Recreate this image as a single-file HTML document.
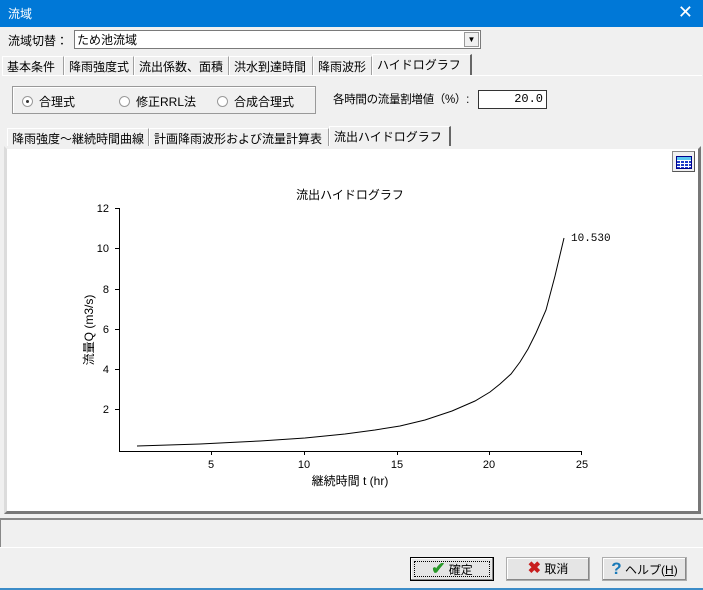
<!DOCTYPE html>
<html><head><meta charset="utf-8"><style>
*{margin:0;padding:0;box-sizing:border-box}
body{width:703px;height:590px;background:#f0f0f0;font-family:"Liberation Sans","Noto Sans CJK JP",sans-serif;font-size:12px;color:#000;position:relative;overflow:hidden}
.abs{position:absolute}
.title{left:0;top:0;width:703px;height:27px;background:#0078d7;color:#fff}
.tab{position:absolute;top:56px;height:19px;line-height:21px;border:1px solid #fff;border-right-color:#a0a0a0;border-bottom:none;padding:0 4px;white-space:nowrap}
.btn{position:absolute;top:557px;height:24px;border:1px solid #adadad;background:#e5e5e5;box-shadow:inset -1px -1px #888,inset 1px 1px #fff;text-align:center;line-height:22px}
.rad{display:inline-block;width:11px;height:11px;border-radius:50%;border:1px solid #999;background:#fff;vertical-align:-1px;margin-right:6px;position:relative}
</style></head><body>
<div class="abs title"><span style="position:absolute;left:8px;top:5px">流域</span><span style="position:absolute;right:10px;top:2px;font-size:18px">✕</span></div>
<div class="abs" style="left:8px;top:32px">流域切替：</div>
<div class="abs" style="left:74px;top:30px;width:407px;height:19px;background:#fff;border:1px solid #7a7a7a"><span style="position:absolute;left:2px;top:0px">ため池流域</span><div style="position:absolute;right:1px;top:1px;width:15px;height:15px;background:#f0f0f0;border:1px solid #999;font-size:8px;text-align:center;line-height:14px">▼</div></div>
<div class="tab" style="left:2px;width:62px">基本条件</div>
<div class="tab" style="left:64px;width:70px">降雨強度式</div>
<div class="tab" style="left:134px;width:95px">流出係数、面積</div>
<div class="tab" style="left:229px;width:84px">洪水到達時間</div>
<div class="tab" style="left:313px;width:59px">降雨波形</div>
<div class="tab" style="left:372px;top:54px;height:21px;width:100px;background:#f0f0f0;border-right:2px solid #666">ハイドログラフ</div>
<div class="abs" style="left:2px;top:75px;width:700px;height:1px;background:#fff"></div>
<div class="abs" style="left:12px;top:86px;width:304px;height:28px;border:1px solid #999;box-shadow:inset 1px 1px #fff"></div>
<div class="abs" style="left:22px;top:93px"><span class="rad"><span style="position:absolute;left:3px;top:3px;width:3px;height:3px;background:#333;border-radius:50%"></span></span>合理式</div>
<div class="abs" style="left:119px;top:93px"><span class="rad"></span>修正RRL法</div>
<div class="abs" style="left:217px;top:93px"><span class="rad"></span>合成合理式</div>
<div class="abs" style="left:333px;top:91px;font-size:11.5px;white-space:nowrap;letter-spacing:-0.3px">各時間の流量割増値（%）:</div>
<div class="abs" style="left:478px;top:90px;width:69px;height:19px;background:#fff;border:1px solid #333;text-align:right;padding-right:3px;line-height:17px;font-family:'Liberation Mono',monospace">20.0</div>
<div class="tab" style="top:128px;left:7px;width:142px">降雨強度～継続時間曲線</div>
<div class="tab" style="top:128px;left:149px;width:180px">計画降雨波形および流量計算表</div>
<div class="tab" style="top:126px;height:21px;left:329px;width:122px;border-right:2px solid #666">流出ハイドログラフ</div>
<div class="abs" style="left:4px;top:146px;width:697px;height:368px;background:#fff;border:3px solid #dcdcdc;border-top-color:#f0f0f0;border-right:3px solid #777;border-bottom:3px solid #777"></div>
<div class="abs" style="left:672px;top:151px;width:23px;height:21px;background:#f0f0f0;border:1px solid #888;border-right-color:#555;border-bottom-color:#555"><div style="position:absolute;left:3px;top:4px;width:16px;height:13px;border:1px solid #00008b;background:repeating-linear-gradient(90deg,#1e3cc8 0 3px,#fff 3px 4px)"><div style="height:3px;background:#5ac8f0"></div><div style="height:9px;background:repeating-linear-gradient(0deg,transparent 0 2px,#fff 2px 3px)"></div></div></div>
<svg class="abs" style="left:0;top:0" width="703" height="590">
<g font-family="Liberation Sans,Noto Sans CJK JP,sans-serif" font-size="11">
<text x="350" y="199" text-anchor="middle" font-size="12">流出ハイドログラフ</text>
<line x1="119.5" y1="208" x2="119.5" y2="452" stroke="#000"/>
<line x1="119" y1="451.5" x2="582" y2="451.5" stroke="#000"/>
<g stroke="#000">
<line x1="115" y1="208.5" x2="119" y2="208.5"/><line x1="115" y1="248.5" x2="119" y2="248.5"/><line x1="115" y1="289.5" x2="119" y2="289.5"/><line x1="115" y1="329.5" x2="119" y2="329.5"/><line x1="115" y1="369.5" x2="119" y2="369.5"/><line x1="115" y1="409.5" x2="119" y2="409.5"/>
<line x1="211.5" y1="451" x2="211.5" y2="455"/><line x1="304.5" y1="451" x2="304.5" y2="455"/><line x1="397.5" y1="451" x2="397.5" y2="455"/><line x1="489.5" y1="451" x2="489.5" y2="455"/><line x1="581.5" y1="451" x2="581.5" y2="455"/>
</g>
<g text-anchor="end"><text x="109" y="212">12</text><text x="109" y="252">10</text><text x="109" y="293">8</text><text x="109" y="333">6</text><text x="109" y="373">4</text><text x="109" y="413">2</text></g>
<g text-anchor="middle"><text x="211" y="468">5</text><text x="304" y="468">10</text><text x="397" y="468">15</text><text x="489" y="468">20</text><text x="582" y="468">25</text></g>
<text x="350" y="485" text-anchor="middle" font-size="12">継続時間 t (hr)</text>
<text transform="translate(93,330) rotate(-90)" text-anchor="middle" font-size="12">流量Q (m3/s)</text>
<text x="571" y="241" font-family="Liberation Mono,monospace">10.530</text>
<polyline fill="none" stroke="#000" points="137,446 200,444 260,441 305,438 345,434 375,430 400,426 425,420 452,411 475,401 490,392 500,384 511,374 520,362 528,349 536,333 546,310 555,276 564,238"/>
</g>
</svg>
<div class="abs" style="left:0;top:518px;width:703px;height:2px;background:#888"></div>
<div class="abs" style="left:0;top:520px;width:1px;height:28px;background:#888"></div>
<div class="abs" style="left:0;top:547px;width:703px;height:1px;background:#fff"></div>
<div class="btn" style="left:410px;width:84px;border:1px solid #000"><div style="position:absolute;left:3px;top:3px;right:3px;bottom:3px;border:1px dotted #000"></div><span style="color:#2a9a2a;font-size:17px;font-weight:bold">✔</span> 確定</div>
<div class="btn" style="left:506px;width:84px"><span style="color:#c81e1e;font-size:16px;font-weight:bold">✖</span> 取消</div>
<div class="btn" style="left:602px;width:85px"><span style="color:#1a7ab8;font-size:17px;font-weight:bold">?</span> ヘルプ(<u>H</u>)</div>
<div class="abs" style="left:0;top:588px;width:703px;height:2px;background:#3c8cc8"></div>
</body></html>
